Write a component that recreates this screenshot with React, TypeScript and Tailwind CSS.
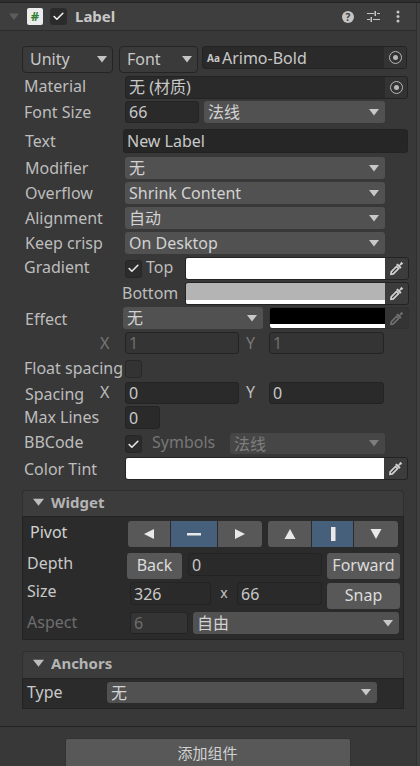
import type { ReactNode } from 'react';
import { Check } from 'lucide-react';

const FONT = 'font-["Noto_Sans","Noto_Sans_CJK_SC",sans-serif]';

function Caret({ color = '#c4c4c4', className = '' }: { color?: string; className?: string }) {
  return (
    <svg width="10" height="7" viewBox="0 0 10 7" className={className}>
      <path d="M0 0H10L5 6.5Z" fill={color} />
    </svg>
  );
}

function Label({ children, className = 'w-[101px]' }: { children: ReactNode; className?: string }) {
  return <div className={`shrink-0 text-[16px] leading-none text-[#bdbdbd] whitespace-nowrap ${className}`}>{children}</div>;
}

function Field({ children, className = '', dim = false }: { children?: ReactNode; className?: string; dim?: boolean }) {
  return (
    <div
      className={`flex items-center rounded-[3px] border border-[#232323] pl-[3px] text-[16px] leading-none whitespace-nowrap overflow-hidden ${
        dim ? 'bg-[#343434] border-[#2e2e2e] text-[#6e6e6e]' : 'bg-[#2a2a2a] text-[#c8c8c8]'
      } ${className}`}
    >
      {children}
    </div>
  );
}

function Popup({ children, className = '', dim = false }: { children: ReactNode; className?: string; dim?: boolean }) {
  return (
    <div
      className={`flex items-center justify-between rounded-[3px] pl-[4px] pr-[4px] text-[16px] leading-none whitespace-nowrap ${
        dim ? 'bg-[#464646] text-[#7d7d7d]' : 'bg-[#515151] text-[#d2d2d2]'
      } ${className}`}
    >
      <span>{children}</span>
      <Caret color={dim ? '#7d7d7d' : '#c8c8c8'} className="mr-[2px]" />
    </div>
  );
}

function Toggle({ on = true }: { on?: boolean }) {
  return (
    <div
      className={`flex h-[18px] w-[17px] shrink-0 items-center justify-center rounded-[3px] border ${
        on ? 'border-[#262626] bg-[#2c2c2c]' : 'border-[#282828] bg-[#333333]'
      }`}
    >
      {on && <Check size={13} strokeWidth={3} color="#e8e8e8" />}
    </div>
  );
}

function Picker({ className = '', dim = false }: { className?: string; dim?: boolean }) {
  const c = dim ? '#6f6f6f' : '#d2d2d2';
  return (
    <svg width="15" height="15" viewBox="0 0 15 15" className={className}>
      <path d="M8.500 2.500 10.300 4 12.300.8 14.300 2.700 11 4.800 12.600 6.500 11.300 7.800 7.200 3.800Z" fill={c} />
      <path d="M7.500 5.500 9.600 7.600 4.300 12.900 2 13.200 2.200 10.800Z" fill="none" stroke={c} strokeWidth="1.700" />
    </svg>
  );
}

function Swatch({ className, fill, strip = false, dim = false }: { className: string; fill: string; strip?: boolean; dim?: boolean }) {
  return (
    <div className={`flex items-stretch overflow-hidden rounded-[3px] border ${dim ? 'border-[#323232] bg-[#343434]' : 'border-[#232323] bg-[#3c3c3c]'} ${className}`}>
      <div className={`flex min-w-0 flex-1 flex-col ${fill}`}>
        <div className="flex-1" />
        {strip && <div className="h-[4px] bg-white" />}
      </div>
      <div className="flex w-[23px] shrink-0 items-center justify-center">
        <Picker dim={dim} />
      </div>
    </div>
  );
}

function Target({ className = '' }: { className?: string }) {
  return (
    <div className={`flex w-[22px] shrink-0 items-center justify-center self-stretch bg-[#333333] ${className}`}>
      <div className="flex h-[13px] w-[13px] items-center justify-center rounded-full border border-[#b8b8b8]">
        <div className="h-[5px] w-[5px] rounded-full bg-[#b8b8b8]" />
      </div>
    </div>
  );
}

function Btn({ children, className = '' }: { children: ReactNode; className?: string }) {
  return (
    <div className={`flex items-center justify-center rounded-[3px] bg-[#585858] pb-[2px] text-[16px] leading-none text-[#dcdcdc] ${className}`}>
      {children}
    </div>
  );
}

function SegIcon({ d, active = false, className = '' }: { d: ReactNode; active?: boolean; className?: string }) {
  return (
    <div className={`flex h-[26px] items-center justify-center ${active ? 'bg-[#46607c]' : 'bg-[#585858]'} ${className}`}>
      <svg width="14" height="14" viewBox="0 0 14 14" fill="#e8e8e8">
        {d}
      </svg>
    </div>
  );
}

function SectionHead({ title, className = 'h-[26px] pb-[2px]' }: { title: string; className?: string }) {
  return (
    <div className={`flex items-center gap-[7px] rounded-t-[4px] border-x border-t border-[#2f2f2f] bg-[#3c3c3c] pl-[10px] ${className}`}>
      <Caret color="#bdbdbd" className="h-[9px] w-[11px]" />
      <span className="text-[15px] font-bold leading-none text-[#b4b4b4]">{title}</span>
    </div>
  );
}

export default function App() {
  return (
    <div className={`relative h-[766px] w-[420px] overflow-hidden bg-[#383838] ${FONT}`}>
      <div className="h-[3px] border-b border-[#232323] bg-[#2f2f2f]" />

      {/* component header */}
      <div className="flex h-[28px] items-center border-b border-[#2b2b2b] bg-[#3e3e3e] pl-[9px] pr-[20px]">
        <Caret color="#5c5c5c" className="h-[8px] w-[10px]" />
        <div className="ml-[8px] flex h-[17px] w-[16px] items-center justify-center rounded-[2px] bg-[#ececec] text-[13px] font-bold leading-none text-[#2f7d32]">#</div>
        <div className="ml-[7px] flex h-[17px] w-[17px] items-center justify-center rounded-[3px] bg-[#2b2b2b]">
          <Check size={13} strokeWidth={3} color="#f0f0f0" />
        </div>
        <div className="ml-[8px] text-[15px] font-bold leading-none text-[#c8c8c8]">Label</div>
        <div className="ml-auto flex h-[12px] w-[12px] items-center justify-center rounded-full bg-[#c4c4c4] text-[10px] font-bold leading-none text-[#3c3c3c]">?</div>
        <svg width="13" height="13" viewBox="0 0 13 13" className="ml-[13px]" fill="#c4c4c4">
          <path d="M0 3h7v1H0zM10 3h3v1h-3zM7.500 1h1.500v5H7.500zM0 9h3v1H0zM6 9h7v1H6zM3.500 7H5v5H3.500z" />
        </svg>
        <svg width="4" height="13" viewBox="0 0 4 13" className="ml-[16px]" fill="#c4c4c4">
          <circle cx="2" cy="2" r="1.500" />
          <circle cx="2" cy="6.500" r="1.500" />
          <circle cx="2" cy="11" r="1.500" />
        </svg>
      </div>

      <div className="flex flex-col pl-[24px]">
        {/* font row */}
        <div className="ml-[-2px] mt-[15px] flex h-[27px] items-start">
          <div className="flex h-[27px] w-[91px] items-center justify-between rounded-[4px] border border-[#242424] bg-[#3a3a3a] pb-[1px] pl-[7px] pr-[5px] text-[16px] leading-none text-[#c8c8c8]">
            Unity
            <Caret color="#c4c4c4" />
          </div>
          <div className="ml-[6px] flex h-[27px] w-[79px] items-center justify-between rounded-[4px] border border-[#242424] bg-[#3a3a3a] pb-[1px] pl-[7px] pr-[5px] text-[16px] leading-none text-[#c8c8c8]">
            Font
            <Caret color="#c4c4c4" />
          </div>
          <Field className="ml-[4px] h-[23px] w-[205px]">
            <span className="ml-[1px] mr-[2px] text-[10px] font-bold text-[#c8c8c8]">Aa</span>
            <span className="text-[#c8c8c8]">Arimo-Bold</span>
            <Target className="ml-auto" />
          </Field>
        </div>

        <div className="mt-[3px] flex h-[22px] items-center">
          <Label className="w-[101px] pb-[2px]">Material</Label>
          <Field className="h-[23px] w-[283px]">
            无 (材质)
            <Target className="ml-auto" />
          </Field>
        </div>

        <div className="mt-[3px] flex h-[22px] items-center">
          <Label>Font Size</Label>
          <Field className="h-[22px] w-[74px]">66</Field>
          <Popup className="ml-[5px] h-[22px] w-[181px]">法线</Popup>
        </div>

        <div className="mt-[6px] flex h-[24px] items-center">
          <Label className="ml-[1px] w-[98px]">Text</Label>
          <Field className="h-[24px] w-[285px] bg-[#262626]">New Label</Field>
        </div>

        <div className="mt-[4px] flex h-[22px] items-center">
          <Label className="ml-[1px] w-[100px]">Modifier</Label>
          <Popup className="h-[22px] w-[260px]">无</Popup>
        </div>
        <div className="mt-[3px] flex h-[22px] items-center">
          <Label className="ml-[1px] w-[100px] pb-[1px]">Overflow</Label>
          <Popup className="h-[22px] w-[260px]">Shrink Content</Popup>
        </div>
        <div className="mt-[3px] flex h-[22px] items-center">
          <Label className="ml-[1px] w-[100px] pb-[1px]">Alignment</Label>
          <Popup className="h-[22px] w-[260px]">自动</Popup>
        </div>
        <div className="mt-[3px] flex h-[22px] items-center">
          <Label className="ml-[1px] w-[100px] pb-[1px]">Keep crisp</Label>
          <Popup className="h-[22px] w-[260px]">On Desktop</Popup>
        </div>

        <div className="mt-[3px] flex h-[23px] items-center">
          <Label className="w-[101px] pb-[3px]">Gradient</Label>
          <Toggle />
          <span className="ml-[4px] w-[39px] pb-[3px] text-[16px] leading-none text-[#bdbdbd]">Top</span>
          <Swatch className="h-[23px] w-[224px]" fill="bg-white" />
        </div>
        <div className="mt-[2px] flex h-[23px] items-center">
          <Label className="ml-[98px] w-[63px] pb-[1px]">Bottom</Label>
          <Swatch className="h-[23px] w-[224px]" fill="bg-[#b4b4b4]" strip />
        </div>

        <div className="mt-[2px] flex h-[22px] items-center">
          <Label className="ml-[1px] w-[98px] pt-[2px]">Effect</Label>
          <Popup className="h-[22px] w-[140px]">无</Popup>
          <Swatch className="ml-[6px] h-[22px] w-[140px]" fill="bg-black" strip dim />
        </div>

        <div className="mt-[3px] flex h-[22px] items-center">
          <span className="ml-[76px] w-[25px] text-[16px] leading-none text-[#777777]">X</span>
          <Field className="h-[22px] w-[114px]" dim>1</Field>
          <span className="ml-[7px] w-[23px] text-[16px] leading-none text-[#777777]">Y</span>
          <Field className="h-[22px] w-[115px]" dim>1</Field>
        </div>

        <div className="mt-[5px] flex h-[19px] items-center">
          <Label className="w-[101px] pb-[2px]">Float spacing</Label>
          <Toggle on={false} />
        </div>

        <div className="mt-[3px] flex h-[23px] items-center">
          <Label className="ml-[1px] w-[75px] pt-[2px]">Spacing</Label>
          <span className="w-[25px] pb-[2px] text-[16px] leading-none text-[#bdbdbd]">X</span>
          <Field className="h-[22px] w-[114px]">0</Field>
          <span className="ml-[7px] w-[23px] pb-[2px] text-[16px] leading-none text-[#bdbdbd]">Y</span>
          <Field className="h-[22px] w-[115px]">0</Field>
        </div>

        <div className="mt-[2px] flex h-[23px] items-center">
          <Label className="w-[101px] pb-[2px]">Max Lines</Label>
          <Field className="h-[23px] w-[35px]">0</Field>
        </div>

        <div className="mt-[5px] flex h-[20px] items-center">
          <Label className="w-[101px] pb-[4px]">BBCode</Label>
          <Toggle />
          <span className="ml-[10px] w-[78px] pb-[4px] text-[16px] leading-none text-[#777777]">Symbols</span>
          <Popup className="h-[21px] w-[155px] self-end" dim>法线</Popup>
        </div>

        <div className="mt-[3px] flex h-[23px] items-center">
          <Label>Color Tint</Label>
          <Swatch className="h-[23px] w-[283px]" fill="bg-white" />
        </div>

        {/* Widget */}
        <div className="ml-[-2px] mt-[10px] w-[382px]">
          <SectionHead title="Widget" />
          <div className="flex h-[124px] flex-col border-x border-y border-[#232323] bg-[#2b2b2b] pl-[4px]">
            <div className="mt-[4px] flex h-[26px] items-center">
              <span className="ml-[3px] w-[98px] pb-[5px] text-[16px] leading-none text-[#d2d2d2]">Pivot</span>
              <div className="flex overflow-hidden rounded-[3px]">
                <SegIcon className="w-[42px]" d={<path d="M2 7 12 2V12Z" />} />
                <SegIcon className="ml-[1px] w-[46px]" active d={<rect x="0" y="6" width="14" height="2.500" />} />
                <SegIcon className="ml-[1px] w-[44px]" d={<path d="M12 7 2 2V12Z" />} />
              </div>
              <div className="ml-[6px] flex overflow-hidden rounded-[3px]">
                <SegIcon className="w-[43px]" d={<path d="M7 2 12.500 12H1.500Z" />} />
                <SegIcon className="ml-[1px] w-[41px]" active d={<rect x="5" y="0" width="4.500" height="14" />} />
                <SegIcon className="ml-[1px] w-[44px]" d={<path d="M7 12 12.500 2H1.500Z" />} />
              </div>
            </div>
            <div className="mt-[6px] flex h-[26px] items-center">
              <span className="w-[100px] pb-[6px] text-[16px] leading-none text-[#c8c8c8]">Depth</span>
              <Btn className="h-[26px] w-[55px]">Back</Btn>
              <Field className="ml-[6px] h-[23px] w-[134px] self-start">0</Field>
              <Btn className="ml-[5px] h-[26px] w-[73px]">Forward</Btn>
            </div>
            <div className="mt-[4px] flex h-[26px] items-center">
              <span className="w-[103px] pb-[10px] text-[16px] leading-none text-[#c8c8c8]">Size</span>
              <Field className="mt-[-1px] h-[23px] w-[81px] self-start">326</Field>
              <span className="w-[26px] pb-[7px] text-center text-[14px] leading-none text-[#c8c8c8]">x</span>
              <Field className="mt-[-1px] h-[23px] w-[85px] self-start">66</Field>
              <Btn className="ml-[5px] h-[26px] w-[73px]">Snap</Btn>
            </div>
            <div className="mt-[3px] flex h-[22px] items-center">
              <span className="w-[103px] pb-[2px] text-[16px] leading-none text-[#6e6e6e]">Aspect</span>
              <Field className="h-[22px] w-[58px]" dim>6</Field>
              <Popup className="ml-[5px] h-[22px] w-[206px]">自由</Popup>
            </div>
          </div>
        </div>

        {/* Anchors */}
        <div className="ml-[-2px] mt-[11px] w-[382px]">
          <SectionHead title="Anchors" className="h-[27px] pb-[3px]" />
          <div className="flex h-[31px] items-center border-x border-y border-[#232323] bg-[#2b2b2b] pb-[2px] pl-[4px]">
            <span className="w-[80px] pb-[2px] text-[16px] leading-none text-[#c8c8c8]">Type</span>
            <Popup className="h-[21px] w-[270px]">无</Popup>
          </div>
        </div>
      </div>

      <div className="mt-[17px] h-[1px] bg-[#232323]" />
      <div className="mt-[11px] flex justify-center pr-[5px]">
        <div className="flex h-[32px] w-[286px] items-start justify-center rounded-[3px] border border-[#333333] bg-[#585858] pt-[4px] text-[15px] leading-[20px] text-[#d2d2d2]">
          添加组件
        </div>
      </div>

      {/* scrollbar edge */}
      <div className="absolute bottom-0 right-0 top-[3px] w-[4px] border-l border-[#2f2f2f] bg-[#3f3f3f]" />
    </div>
  );
}
